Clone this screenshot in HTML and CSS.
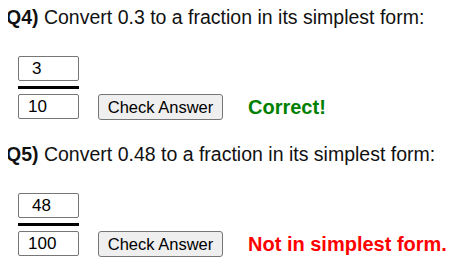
FILE: index.html
```html
<!DOCTYPE html>
<html>
<head>
<meta charset="utf-8">
<link rel="stylesheet" href="styles.css">
</head>
<body>
<div class="question">
  <p class="prompt"><b>Q4)</b> Convert 0.3 to a fraction in its simplest form:</p>
  <div class="problem">
    <input class="box num" type="text" value="3">
    <div class="bar"></div>
    <input class="box den" type="text" value="10">
    <button class="check">Check Answer</button>
    <span class="result ok">Correct!</span>
  </div>
</div>
<div class="question">
  <p class="prompt"><b>Q5)</b> Convert 0.48 to a fraction in its simplest form:</p>
  <div class="problem">
    <input class="box num" type="text" value="48">
    <div class="bar"></div>
    <input class="box den" type="text" value="100">
    <button class="check">Check Answer</button>
    <span class="result bad">Not in simplest form.</span>
  </div>
</div>
</body>
</html>
```
FILE: styles.css
```css
html, body {
  overflow: hidden;
}
body {
  margin: 8px;
  font-family: "Liberation Sans", Arial, sans-serif;
  color: #000;
  background: #fff;
}
.question {
  margin-bottom: 25px;
}
.question:last-child {
  margin-bottom: 0;
}
.prompt {
  margin: 0 0 30px -2px;
  font-size: 19.5px;
  line-height: 18px;
  color: #111;
}
.problem {
  margin-left: 10px;
  display: grid;
  grid-template-columns: 61px auto auto;
  grid-template-rows: 25px 3px 26px;
  row-gap: 5px;
  align-items: center;
  justify-content: start;
}
.box {
  box-sizing: border-box;
  width: 61px;
  height: 25px;
  margin: 0;
  border: 1px solid #767676;
  border-radius: 2px;
  font-family: "Liberation Sans", Arial, sans-serif;
  font-size: 17px;
  color: #000;
  background: #fff;
  padding-top: 0;
  padding-bottom: 0;
  align-self: start;
}
.num {
  grid-column: 1;
  grid-row: 1;
  padding-left: 13px;
}
.bar {
  grid-column: 1;
  grid-row: 2;
  height: 3px;
  background: #000;
}
.den {
  grid-column: 1;
  grid-row: 3;
  padding-left: 9px;
}
.check {
  grid-column: 2;
  grid-row: 3;
  margin-left: 19px;
  box-sizing: border-box;
  width: 125px;
  height: 26px;
  padding: 0;
  font-family: "Liberation Sans", Arial, sans-serif;
  font-size: 16.5px;
  color: #000;
  background: #efefef;
  border: 1px solid #767676;
  border-radius: 3px;
}
.result {
  grid-column: 3;
  grid-row: 3;
  margin-left: 25px;
  font-size: 20px;
  font-weight: bold;
}
.ok { color: #008000; }
.bad { color: #ff0000; }
```
